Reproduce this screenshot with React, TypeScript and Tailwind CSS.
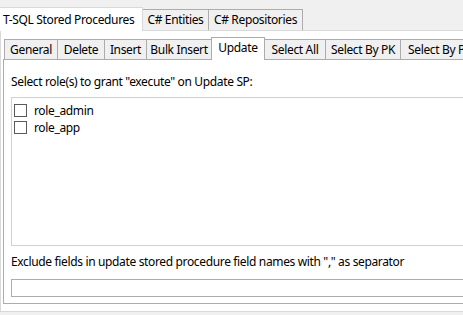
const outerTabs = ["T-SQL Stored Procedures", "C# Entities", "C# Repositories"];

const innerTabs = [
  { label: "General", w: "w-[53px]" },
  { label: "Delete", w: "w-[47px]" },
  { label: "Insert", w: "w-[42px]" },
  { label: "Bulk Insert", w: "w-[65px]" },
  { label: "Update", w: "w-[54px]" },
  { label: "Select All", w: "w-[60px]" },
  { label: "Select By PK", w: "w-[75px]" },
  { label: "Select By PK", w: "w-[80px]" },
];

const roles = ["role_admin", "role_app"];

function Checkbox() {
  return <span className="w-[13px] h-[13px] border border-[#5a5a5a] bg-white shrink-0" />;
}

export default function App() {
  const selectedInner = 4;

  return (
    <div
      className="w-[463px] h-[315px] bg-[#f0f0f0] overflow-hidden flex flex-col text-[12px] text-black tracking-[-0.35px]"
      style={{ fontFamily: '"Noto Sans", "Open Sans", sans-serif' }}
    >
      {/* outer tabs */}
      <div className="flex items-end h-[30px] shrink-0">
        {outerTabs.map((t, i) =>
          i === 0 ? (
            <div
              key={t}
              className="relative z-10 -mb-px h-[24px] w-[143px] bg-white border-r border-t border-[#d9d9d9] flex items-center pl-[3px] leading-none"
            >
              {t}
            </div>
          ) : (
            <div
              key={t}
              className={`h-[21px] border-t border-r border-[#acacac] bg-[#f0f0f0] flex items-center justify-center leading-none ${
                i === 1 ? "w-[66px]" : "w-[94px]"
              }`}
            >
              {t}
            </div>
          )
        )}
      </div>

      {/* outer page */}
      <div className="h-[282px] shrink-0 bg-white border-t border-l border-b border-[#d9d9d9] pl-[2px] pt-[6px] pb-[7px] flex flex-col">
        {/* inner tabs */}
        <div className="flex items-end h-[22px] shrink-0 pl-[1px]">
          {innerTabs.map((t, i) =>
            i === selectedInner ? (
              <div
                key={i}
                className={`relative z-10 -mb-px h-[23px] ${t.w} shrink-0 bg-white border-t border-l border-r border-[#acacac] flex items-center justify-center pb-[2px] leading-none whitespace-nowrap overflow-hidden`}
              >
                {t.label}
              </div>
            ) : (
              <div
                key={i}
                className={`h-[20px] ${t.w} shrink-0 bg-[#f0f0f0] border-t border-[#acacac] ${
                  i === selectedInner + 1 ? "" : "border-l"
                } ${i === innerTabs.length - 1 ? "border-r" : ""} flex items-center justify-center leading-none whitespace-nowrap overflow-hidden`}
              >
                {t.label}
              </div>
            )
          )}
        </div>

        {/* inner page */}
        <div className="flex-1 border-t border-l border-b border-[#acacac] pl-[7px] pt-[14px] flex flex-col">
          <div className="leading-[16px]">Select role(s) to grant "execute" on Update SP:</div>

          <div className="mt-[7px] h-[149px] border-t border-l border-b border-[#bcd6f1] pt-[4px] pl-[2px] flex flex-col">
            {roles.map((r) => (
              <div key={r} className="flex items-center gap-[7px] h-[17px]">
                <Checkbox />
                <span className="leading-none">{r}</span>
              </div>
            ))}
          </div>

          <div className="mt-[8px] leading-[16px]">
            Exclude fields in update stored procedure field names with "," as separator
          </div>

          <div className="mt-[9px] h-[18px] border-t border-l border-b border-[#acacac] bg-white" />
        </div>
      </div>
    </div>
  );
}
